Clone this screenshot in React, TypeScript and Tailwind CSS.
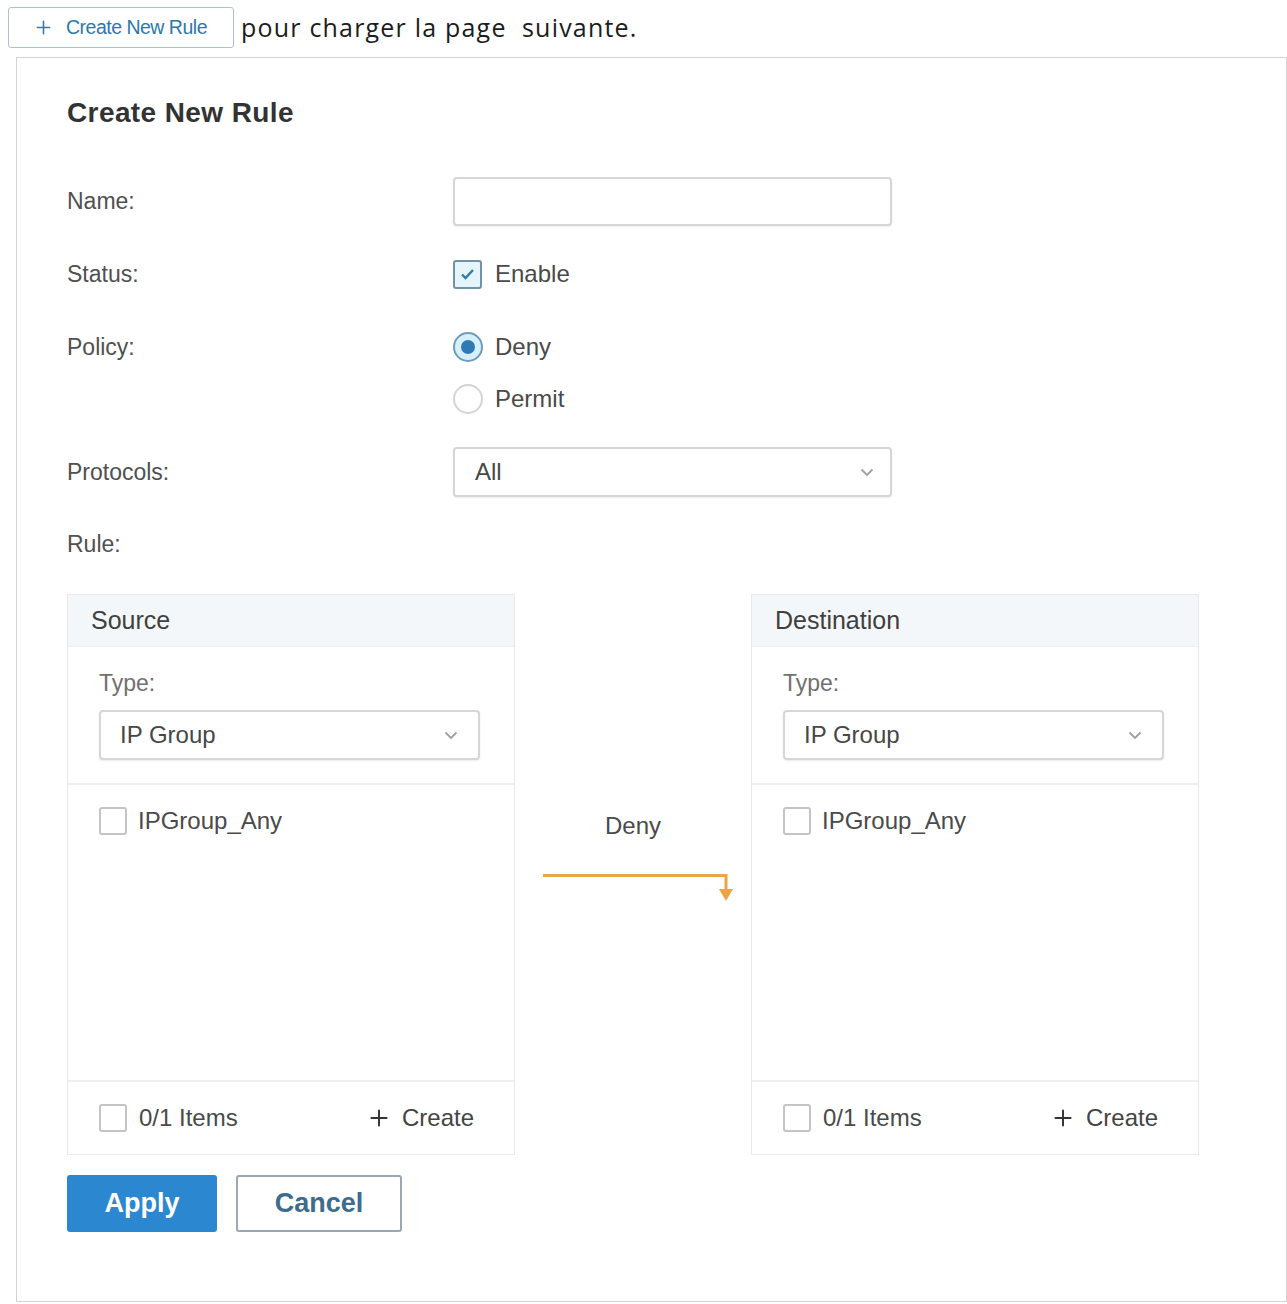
import { Plus } from 'lucide-react';

const ui = { fontFamily: '"Liberation Sans", Arial, sans-serif' };

function Chevron() {
  return (
    <svg width="14" height="9" viewBox="0 0 14 9" fill="none">
      <path d="M1.5 1.5 L7 7 L12.5 1.5" stroke="#9f9f9f" strokeWidth="1.8" />
    </svg>
  );
}

function Checkbox({ checked = false }: { checked?: boolean }) {
  if (checked) {
    return (
      <span className="flex h-[29px] w-[29px] items-center justify-center rounded-[3px] border-2 border-[#6f93a8] bg-[#e6f5fc]">
        <svg width="15" height="12" viewBox="0 0 15 12" fill="none">
          <path d="M2 6.5 L5.5 10 L13 2" stroke="#2f78b0" strokeWidth="2.4" />
        </svg>
      </span>
    );
  }
  return <span className="block h-[28px] w-[28px] rounded-[3px] border-2 border-[#c4c4c4] bg-white" />;
}

function Radio({ checked = false }: { checked?: boolean }) {
  if (checked) {
    return (
      <span className="flex h-[30px] w-[30px] items-center justify-center rounded-full border-2 border-[#6f9cb8] bg-[#d6f0fb]">
        <span className="h-[14px] w-[14px] rounded-full bg-[#2e7bb4]" />
      </span>
    );
  }
  return <span className="block h-[30px] w-[30px] rounded-full border-2 border-[#d4d4d4] bg-white" />;
}

function Select({ value, className }: { value: string; className: string }) {
  return (
    <div
      className={`flex items-center justify-between rounded-[4px] border-2 border-[#d6d6d6] bg-white shadow-[0_1px_2px_rgba(0,0,0,0.08)] ${className}`}
    >
      <span className="text-[24px] text-[#474747]">{value}</span>
      <Chevron />
    </div>
  );
}

function Transfer({ title }: { title: string }) {
  return (
    <div className="flex h-[561px] w-[448px] flex-col border border-[#e7e9ec] bg-white">
      <div className="flex h-[52px] items-center border-b border-[#eceef1] bg-[#f4f7fa] pl-[23px]">
        <span className="text-[25px] text-[#3f3f3f]">{title}</span>
      </div>
      <div className="flex flex-col border-b-2 border-[#eeeff1] pb-[23px] pl-[31px] pr-[34px] pt-[22px]">
        <span className="text-[23px] leading-[28px] text-[#707070]">Type:</span>
        <Select value="IP Group" className="mt-[13px] h-[50px] pl-[19px] pr-[20px]" />
      </div>
      <div className="flex flex-1 items-start gap-[11px] pl-[31px] pt-[22px]">
        <Checkbox />
        <span className="text-[24px] leading-[28px] text-[#4a4a4a]">IPGroup_Any</span>
      </div>
      <div className="flex h-[74px] items-center justify-between border-t-2 border-[#eeeff1] pl-[31px] pr-[40px]">
        <div className="flex items-center gap-[12px]">
          <Checkbox />
          <span className="text-[24px] text-[#4a4a4a]">0/1 Items</span>
        </div>
        <div className="flex items-center gap-[10px]">
          <Plus size={26} strokeWidth={1.8} color="#333" />
          <span className="text-[24px] text-[#444]">Create</span>
        </div>
      </div>
    </div>
  );
}

export default function App() {
  return (
    <div className="min-h-[1304px] bg-white pl-[8px] pt-[7px]" style={ui}>
      <div className="flex items-center">
        <div className="flex h-[41px] w-[226px] items-center gap-[12px] rounded-[3px] border border-[#a9c3d6] bg-white pl-[24px]">
          <Plus size={21} strokeWidth={1.8} color="#2c7db4" />
          <span className="text-[19.5px] tracking-[-0.5px] text-[#2c78ad]">Create New Rule</span>
        </div>
        <span
          className="ml-[7px] text-[25px] tracking-[1.2px] text-[#1c1c1c]"
          style={{ fontFamily: '"Open Sans", sans-serif' }}
        >
          pour charger la page&nbsp; suivante.
        </span>
      </div>

      <div className="ml-[8px] mt-[9px] h-[1245px] w-[1271px] border border-[#d3d3d3] pl-[50px] pt-[39px]">
        <h1 className="text-[28px] font-bold leading-[32px] tracking-[0.4px] text-[#333]">Create New Rule</h1>

        <div className="mt-[48px] flex h-[49px] items-center">
          <span className="w-[386px] text-[23px] text-[#505050]">Name:</span>
          <div className="h-[49px] w-[439px] rounded-[4px] border-2 border-[#d6d6d6] bg-white shadow-[0_1px_2px_rgba(0,0,0,0.08)]" />
        </div>

        <div className="mt-[33px] flex h-[30px] items-center">
          <span className="w-[386px] text-[23px] text-[#505050]">Status:</span>
          <Checkbox checked />
          <span className="ml-[13px] text-[24px] text-[#4a4a4a]">Enable</span>
        </div>

        <div className="mt-[43px] flex">
          <span className="w-[386px] text-[23px] leading-[30px] text-[#505050]">Policy:</span>
          <div className="flex flex-col gap-[22px]">
            <div className="flex h-[30px] items-center gap-[12px]">
              <Radio checked />
              <span className="text-[24px] text-[#4a4a4a]">Deny</span>
            </div>
            <div className="flex h-[30px] items-center gap-[12px]">
              <Radio />
              <span className="text-[24px] text-[#4a4a4a]">Permit</span>
            </div>
          </div>
        </div>

        <div className="mt-[33px] flex h-[50px] items-center">
          <span className="w-[386px] text-[23px] text-[#505050]">Protocols:</span>
          <Select value="All" className="h-[50px] w-[439px] pl-[20px] pr-[16px]" />
        </div>

        <div className="mt-[32px] text-[23px] leading-[30px] text-[#505050]">Rule:</div>

        <div className="mt-[35px] flex">
          <Transfer title="Source" />
          <div className="flex w-[236px] flex-col items-center pt-[218px]">
            <span className="text-[24px] leading-[28px] text-[#4a4a4a]">Deny</span>
            <svg width="236" height="64" viewBox="0 0 236 64" fill="none" className="mt-[8px]">
              <path d="M28 27.5 H211 V46" stroke="#eca544" strokeWidth="3" />
              <path d="M204 41 L218 41 L211 53 Z" fill="#eca544" />
            </svg>
          </div>
          <Transfer title="Destination" />
        </div>

        <div className="mt-[20px] flex gap-[19px]">
          <button className="h-[57px] w-[150px] rounded-[3px] bg-[#2b88d0] text-[27px] font-bold text-white">
            Apply
          </button>
          <button className="h-[57px] w-[166px] rounded-[3px] border-2 border-[#9aa8b3] bg-white text-[27px] font-bold text-[#3d6c8c]">
            Cancel
          </button>
        </div>
      </div>
    </div>
  );
}
